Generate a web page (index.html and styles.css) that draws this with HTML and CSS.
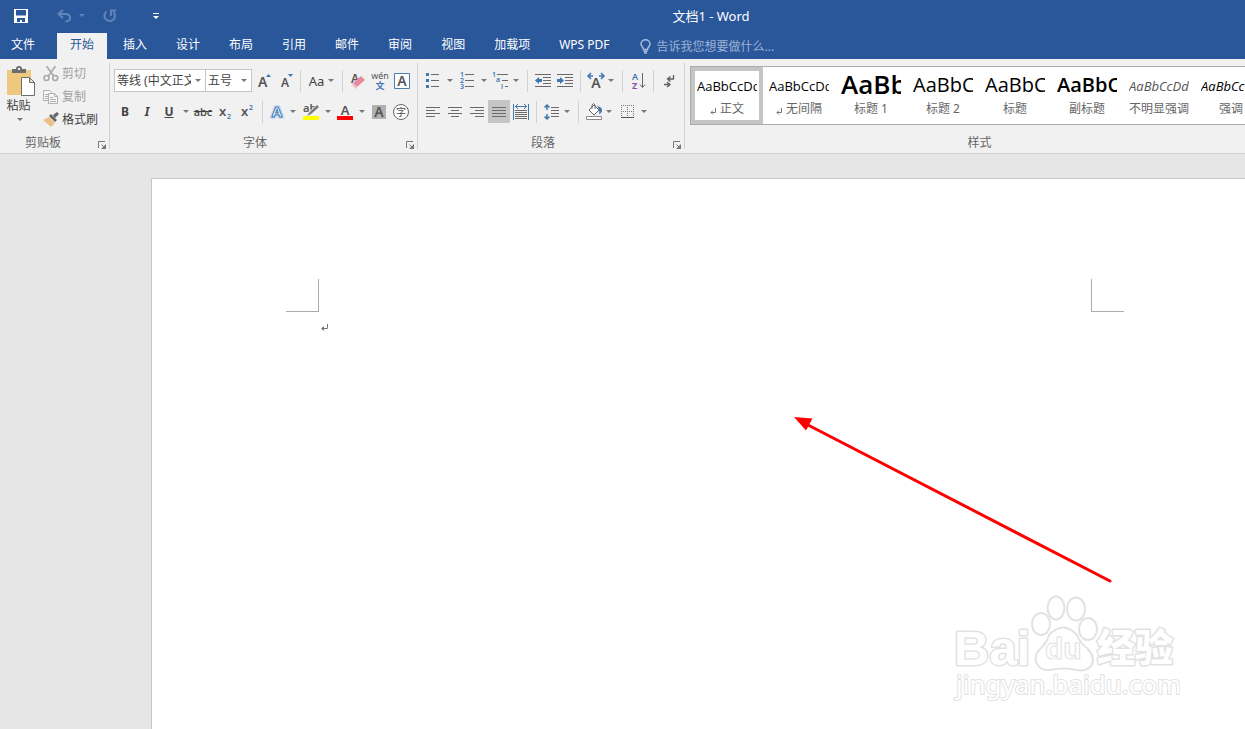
FILE: index.html
```html
<!DOCTYPE html>
<html lang="zh-CN">
<head>
<meta charset="utf-8">
<title>文档1 - Word</title>
<link rel="stylesheet" href="styles.css">
</head>
<body>
<header class="titlebar">
  <div class="quick">
    <button class="q save" aria-label="保存"><svg width="14" height="14" viewBox="0 0 14 14"><path fill="#fff" fill-rule="evenodd" d="M0 0h14v14H0zM2 1v5.500h10V1zM3 9v4h3v-2h2v2h3V9z"/></svg></button>
    <button class="q undo" aria-label="撤消"><svg width="15" height="14" viewBox="0 0 15 14" fill="none" stroke="#6384b8" stroke-width="2"><path d="M6 1L1.500 5L6 9M2 5h6.500c6 0 6.500 7.500 0 7.500"/></svg></button>
    <button class="q undo-more" aria-label="撤消选项"><i class="arrow dim"></i></button>
    <button class="q redo" aria-label="重复"><svg width="14" height="14" viewBox="0 0 14 14" fill="none" stroke="#6384b8" stroke-width="2"><path d="M3.500 2.500A5.300 5.300 0 1 0 10.500 3M8 7V1.500H13"/></svg></button>
    <button class="q custom" aria-label="自定义"><svg width="6" height="6" viewBox="0 0 6 6"><path fill="#fff" d="M0 0h6v1H0zM0 3h6L3 6z"/></svg></button>
  </div>
  <h1 class="title">文档1 - Word</h1>
</header>

<nav class="tabs">
  <button class="tab file">文件</button>
  <button class="tab active">开始</button>
  <button class="tab">插入</button>
  <button class="tab">设计</button>
  <button class="tab">布局</button>
  <button class="tab">引用</button>
  <button class="tab">邮件</button>
  <button class="tab">审阅</button>
  <button class="tab">视图</button>
  <button class="tab">加载项</button>
  <button class="tab">WPS PDF</button>
  <label class="tell"><svg width="11" height="15" viewBox="0 0 11 15" fill="none" stroke="#a9bcdc" stroke-width="1.500"><path d="M3.500 10.500C3.500 8 1 7.500 1 5a4.500 4.300 0 0 1 9 0c0 2.500-2.500 3-2.500 5.500zM3.500 12.200h4M4 14h3"/></svg><input class="tell-input" type="text" aria-label="告诉我" placeholder="告诉我您想要做什么..."></label>
</nav>

<main class="ribbon">
  <section class="group clipboard">
    <div class="clip-body">
      <button class="paste"><svg width="30" height="31" viewBox="0 0 30 31"><path fill="#edc87e" d="M1 4h24v25H1z"/><path fill="#6d6d6d" d="M6 3h4q0-3 3-3t3 3h4v4H6z"/><path fill="#f1f1f1" d="M12 2h2v2h-2z"/><path fill="#fff" stroke="#6d6d6d" d="M15.500 11.500h8l5 5v13h-13zM23.500 11.500v5h5"/></svg><span class="paste-text">粘贴</span><i class="arrow"></i></button>
      <div class="clip-list">
        <button class="clip off"><svg width="16" height="16" viewBox="0 0 16 16" fill="none" stroke="#a9a9a9" stroke-width="1.600"><path d="M3.500 0L11 10.500M12.500 0L5 10.500"/><circle cx="3.500" cy="12" r="2.500"/><circle cx="12.200" cy="12" r="2.500"/></svg>剪切</button>
        <button class="clip off"><svg width="16" height="16" viewBox="0 0 16 16" fill="#f6f6f6" stroke="#b0b0b0"><path d="M.5 1.500h6l2 2v8h-8zM2 5.500h4M2 7.500h4M2 9.500h4"/><path d="M5.500 4.500h6l3 3v7h-9zM11.500 4.500v3h3M7 8.500h3M7 10.500h6M7 12.500h6"/></svg>复制</button>
        <button class="clip"><svg width="16" height="16" viewBox="0 0 16 16"><path fill="#edc087" d="M0 8l6-3 6 6-4 4z"/><path fill="#666" d="M6 4l2-2 6 6-2 2zM10 3l4-3 2 2-4 4z"/></svg>格式刷</button>
      </div>
    </div>
    <footer class="caption">剪贴板<button class="launch" aria-label="剪贴板选项"><svg width="8" height="8" viewBox="0 0 8 8"><path fill="none" stroke="#777" d="M.5 7V.5H7M3.500 3.500L6 6"/><path fill="#777" d="M8 3v5H3z"/></svg></button></footer>
  </section>

  <section class="group font">
    <div class="row">
      <span class="combo family"><select aria-label="字体"><option>等线 (中文正文)</option></select><i class="arrow"></i></span>
      <span class="combo size"><select aria-label="字号"><option>五号</option></select><i class="arrow"></i></span>
      <button class="tool" aria-label="增大字号"><svg viewBox="0 0 22 22"><text class="glyph" x="6" y="17" font-size="14">A</text><path fill="#3f76b0" d="M14 7h5l-2.500-3z"/></svg></button>
      <button class="tool" aria-label="减小字号"><svg viewBox="0 0 22 22"><text class="glyph" x="7" y="17" font-size="12">A</text><path fill="#3f76b0" d="M14 4h5l-2.500 3z"/></svg></button>
      <i class="sep"></i>
      <button class="tool case">Aa<i class="arrow"></i></button>
      <i class="sep"></i>
      <button class="tool" aria-label="清除格式"><svg viewBox="0 0 22 22"><text class="glyph" x="4" y="13" font-size="12">A</text><path fill="#e88a9c" d="M6 13l8-7 4 4-8 7z"/><path fill="#f3b9c3" d="M6 13l4 4-1 2-4-4z"/></svg></button>
      <button class="tool" aria-label="拼音指南"><svg viewBox="0 0 22 22"><text class="glyph thin" x="11" y="9" font-size="9" text-anchor="middle">wén</text><text class="glyph blue" x="11" y="19" font-size="9" text-anchor="middle">文</text></svg></button>
      <button class="tool" aria-label="字符边框"><svg viewBox="0 0 22 22"><path fill="#fff" stroke="#4c7ead" d="M3.500 3.500h15v15h-15z"/><text class="glyph" x="11" y="16" font-size="14" text-anchor="middle">A</text></svg></button>
    </div>
    <div class="row">
      <button class="tool"><b>B</b></button>
      <button class="tool"><em>I</em></button>
      <button class="tool"><u>U</u></button>
      <button class="drop" aria-label="下划线选项"><i class="arrow"></i></button>
      <button class="tool"><s>abc</s></button>
      <button class="tool" aria-label="下标"><svg viewBox="0 0 22 22"><text class="glyph" x="5" y="15" font-size="13">x</text><text class="glyph blue" x="13" y="18" font-size="7">2</text></svg></button>
      <button class="tool" aria-label="上标"><svg viewBox="0 0 22 22"><text class="glyph" x="5" y="15" font-size="13">x</text><text class="glyph blue" x="13" y="9" font-size="7">2</text></svg></button>
      <i class="sep"></i>
      <button class="tool" aria-label="文本效果"><svg viewBox="0 0 22 22"><text x="10" y="16" font-size="15" font-weight="700" text-anchor="middle" fill="#fff" stroke="#cbdcee" stroke-width="4" stroke-linejoin="round">A</text><text x="10" y="16" font-size="15" font-weight="700" text-anchor="middle" fill="#fff" stroke="#4077b5">A</text></svg></button>
      <button class="drop narrow" aria-label="文本效果选项"><i class="arrow"></i></button>
      <button class="tool" aria-label="突出显示"><svg viewBox="0 0 22 22"><text class="glyph" x="3" y="11" font-size="11">ab</text><path fill="#f1f1f1" d="M8 12l8-8 4 2-8 9z"/><path fill="#777" d="M9 12l8-8 2 2-8 7-4 2z"/><path fill="#ff0" d="M3 15h16v4H3z"/></svg></button>
      <button class="drop" aria-label="突出显示颜色"><i class="arrow"></i></button>
      <button class="tool" aria-label="字体颜色"><svg viewBox="0 0 22 22"><text class="glyph" x="11" y="14" font-size="13" text-anchor="middle">A</text><path fill="#f00" d="M3 15h16v4H3z"/></svg></button>
      <button class="drop" aria-label="选择字体颜色"><i class="arrow"></i></button>
      <button class="tool" aria-label="字符底纹"><svg viewBox="0 0 22 22"><path fill="#b1b1b1" d="M4 4h14v14H4z"/><text class="glyph" x="11" y="16" font-size="14" text-anchor="middle">A</text></svg></button>
      <button class="tool" aria-label="带圈字符"><svg viewBox="0 0 22 22"><circle cx="11" cy="11" r="7.500" fill="#fff" stroke="#666"/><text x="11" y="15" font-size="10" text-anchor="middle" fill="#444">字</text></svg></button>
    </div>
    <footer class="caption">字体<button class="launch" aria-label="字体选项"><svg width="8" height="8" viewBox="0 0 8 8"><path fill="none" stroke="#777" d="M.5 7V.5H7M3.500 3.500L6 6"/><path fill="#777" d="M8 3v5H3z"/></svg></button></footer>
  </section>

  <section class="group para">
    <div class="row">
      <button class="tool" aria-label="项目符号"><svg viewBox="0 0 22 22"><path fill="#3f76b0" d="M4 3h3v3H4zM4 9h3v3H4zM4 15h3v3H4z"/><path stroke="#6a6a6a" d="M9 4.500h8M9 10.500h8M9 16.500h8"/></svg></button>
      <button class="drop" aria-label="项目符号选项"><i class="arrow"></i></button>
      <button class="tool" aria-label="编号"><svg viewBox="0 0 22 22"><g class="glyph blue" font-size="7"><text x="4" y="7">1</text><text x="4" y="13">2</text><text x="4" y="19">3</text></g><path stroke="#6a6a6a" d="M9 4.500h9M9 10.500h9M9 16.500h9"/></svg></button>
      <button class="drop" aria-label="编号选项"><i class="arrow"></i></button>
      <button class="tool" aria-label="多级列表"><svg viewBox="0 0 22 22"><g class="glyph blue" font-size="7"><text x="2" y="7">1</text><text x="6" y="12">a</text><text x="11" y="19">i</text></g><path stroke="#6a6a6a" d="M7 4.500h11M12 10.500h6M15 16.500h3"/></svg></button>
      <button class="drop slim" aria-label="多级列表选项"><i class="arrow"></i></button>
      <i class="sep"></i>
      <button class="tool" aria-label="减少缩进"><svg viewBox="0 0 22 22"><path stroke="#6a6a6a" d="M3 4.500h16M11 7.500h8M11 10.500h8M11 13.500h8M3 16.500h16"/><path fill="#3f76b0" d="M3 10.500L7 7v2h3v3H7v2z"/></svg></button>
      <button class="tool" aria-label="增加缩进"><svg viewBox="0 0 22 22"><path stroke="#6a6a6a" d="M3 4.500h16M11 7.500h8M11 10.500h8M11 13.500h8M3 16.500h16"/><path fill="#3f76b0" d="M10 10.500L6 7v2H3v3h3v2z"/></svg></button>
      <i class="sep"></i>
      <button class="tool" aria-label="中文版式"><svg viewBox="0 0 22 22"><text class="glyph" x="11" y="18" font-size="14" text-anchor="middle">A</text><path fill="none" stroke="#3f76b0" stroke-width="1.500" d="M6 3L3 6l3 3M3 6h5M16 3l3 3-3 3M19 6h-5"/></svg></button>
      <button class="drop slim" aria-label="中文版式选项"><i class="arrow"></i></button>
      <i class="sep"></i>
      <button class="tool" aria-label="排序"><svg viewBox="0 0 22 22"><text class="glyph blue" x="5" y="10" font-size="9">A</text><text x="5" y="19" font-size="9" font-weight="700" fill="#8c51a5">Z</text><path fill="none" stroke="#666" d="M15.500 3v14M13 14.500l2.500 3 2.500-3"/></svg></button>
      <i class="sep"></i>
      <button class="tool" aria-label="显示编辑标记"><svg viewBox="0 0 22 22" fill="none" stroke="#5d5d5d"><path d="M15.500 5v4H10M12.500 6.500l-3 2.500 3 2.500M6 14.500h6M9 12l3 2.500L9 17" stroke-width="1.300"/></svg></button>
    </div>
    <div class="row">
      <button class="tool" aria-label="左对齐"><svg viewBox="0 0 22 22"><path stroke="#6a6a6a" d="M4 6.500h14M4 9.500h9M4 12.500h14M4 15.500h9"/></svg></button>
      <button class="tool" aria-label="居中"><svg viewBox="0 0 22 22"><path stroke="#6a6a6a" d="M4 6.500h14M7 9.500h8M4 12.500h14M7 15.500h8"/></svg></button>
      <button class="tool" aria-label="右对齐"><svg viewBox="0 0 22 22"><path stroke="#6a6a6a" d="M4 6.500h14M9 9.500h9M4 12.500h14M9 15.500h9"/></svg></button>
      <button class="tool on" aria-label="两端对齐"><svg viewBox="0 0 22 22"><path stroke="#6a6a6a" d="M4 6.500h14M4 9.500h14M4 12.500h14M4 15.500h14"/></svg></button>
      <button class="tool" aria-label="分散对齐"><svg viewBox="0 0 22 22"><path stroke="#6a6a6a" d="M5 9.500h12M5 11.500h12M5 13.500h12M5 15.500h12M5 17.500h12"/><path fill="none" stroke="#3f76b0" d="M3.500 3v16M18.500 3v16M5 5.500h12M8 3L5.500 5.500 8 8M14 3l2.500 2.500L14 8"/></svg></button>
      <i class="sep"></i>
      <button class="tool" aria-label="行距"><svg viewBox="0 0 22 22"><path stroke="#6a6a6a" d="M10 6.500h8M10 9.500h8M10 12.500h8M10 15.500h8"/><path fill="none" stroke="#3f76b0" stroke-width="1.500" d="M6 4v5M3.500 6.500L6 4l2.500 2.500M6 18v-5M3.500 15.500L6 18l2.500-2.500"/></svg></button>
      <button class="drop slim" aria-label="行距选项"><i class="arrow"></i></button>
      <i class="sep"></i>
      <button class="tool" aria-label="底纹"><svg viewBox="0 0 22 22"><path fill="#fff" stroke="#666" d="M6 9l5-5 5 5-5 5zM9 8V4q1.500-3 3 0v4"/><path fill="#fff" stroke="#888" d="M3.500 15.500h15v3h-15z"/><path fill="#3f76b0" d="M14 5q5 1 5 4t-3 4q1-4-2-8z"/></svg></button>
      <button class="drop slim" aria-label="底纹颜色"><i class="arrow"></i></button>
      <button class="tool" aria-label="边框"><svg viewBox="0 0 22 22"><path fill="none" stroke="#777" stroke-dasharray="1 1" d="M5 4.500h13M5 10.500h13M5.500 4v12M11.500 4v12M17.500 4v12"/><path stroke="#555" d="M5 16.500h13"/></svg></button>
      <button class="drop" aria-label="边框选项"><i class="arrow"></i></button>
    </div>
    <footer class="caption">段落<button class="launch" aria-label="段落选项"><svg width="8" height="8" viewBox="0 0 8 8"><path fill="none" stroke="#777" d="M.5 7V.5H7M3.500 3.500L6 6"/><path fill="#777" d="M8 3v5H3z"/></svg></button></footer>
  </section>

  <section class="group styles">
    <div class="gallery">
      <button class="style chosen"><span class="sample">AaBbCcDd</span><span class="name"><svg class="ret" width="6" height="7" viewBox="0 0 6 7"><path fill="none" stroke="#777" d="M5.500 0v4.500H1M3 2.500l-2 2 2 2"/></svg>正文</span></button>
      <button class="style"><span class="sample">AaBbCcDd</span><span class="name"><svg class="ret" width="6" height="7" viewBox="0 0 6 7"><path fill="none" stroke="#777" d="M5.500 0v4.500H1M3 2.500l-2 2 2 2"/></svg>无间隔</span></button>
      <button class="style"><span class="sample huge">AaBb</span><span class="name">标题 1</span></button>
      <button class="style"><span class="sample big">AaBbC</span><span class="name">标题 2</span></button>
      <button class="style"><span class="sample big">AaBbC</span><span class="name">标题</span></button>
      <button class="style"><span class="sample big heavy">AaBbC</span><span class="name">副标题</span></button>
      <button class="style"><span class="sample slant soft">AaBbCcDd</span><span class="name">不明显强调</span></button>
      <button class="style"><span class="sample slant">AaBbCcDd</span><span class="name">强调</span></button>
    </div>
    <footer class="caption">样式</footer>
  </section>
</main>

<div class="workspace">
  <article class="page">
    <div class="margins"><i class="corner left"></i><i class="corner right"></i></div>
    <p class="text"><svg width="8" height="8" viewBox="0 0 8 8"><path fill="none" stroke="#777" d="M6.500 0v4.500H1"/><path fill="#777" d="M0 4.500L3 2v5z"/></svg></p>
    <svg class="pointer" width="320" height="170" viewBox="0 0 320 170"><path stroke="#f00" stroke-width="3" stroke-linecap="round" d="M14 10L316 166"/><path fill="#f00" d="M0 2l18.500 1.500-6.500 12z"/></svg>
    <svg class="watermark" width="230" height="112" viewBox="0 0 230 112" fill="#fff" stroke="#e2e2e2">
      <g stroke-width="3" paint-order="stroke" stroke-linejoin="round">
        <text x="4" y="73" font-size="49" font-weight="700" class="mark-latin">Bai</text>
        <text x="147" y="69" font-size="38" font-weight="900" class="mark-cjk">经验</text>
        <text x="6" y="102" font-size="26" class="mark-url" stroke-width="2">jingyan.baidu.com</text>
      </g>
      <g stroke-width="2"><ellipse cx="91" cy="32" rx="9" ry="11"/><ellipse cx="106" cy="16" rx="8.500" ry="11.500"/><ellipse cx="126" cy="17" rx="9" ry="11.500"/><ellipse cx="138" cy="37" rx="9" ry="11"/><path d="M99 43q14-15 28 0 3 8 10 13c13 14 2 25-10 22q-14-3-27 0c-14 1-19-13-9-22q6-6 8-13z"/></g>
      <text x="95" y="67" font-size="30" font-weight="700" stroke-width="1" class="mark-latin">du</text>
    </svg>
  </article>
</div>
</body>
</html>
```
FILE: styles.css
```css
* { box-sizing: border-box; }

body {
  margin: 0;
  min-height: 100vh;
  display: flex;
  flex-direction: column;
  overflow: hidden;
  background: #e6e6e6;
  color: #444;
  font: 12px/16px "Noto Sans", "Noto Sans CJK SC", sans-serif;
}

button, select, input {
  margin: 0;
  padding: 0;
  border: 0;
  background: none;
  color: inherit;
  font: inherit;
}

svg { display: block; flex: none; }

/* Title bar and quick access */
.titlebar {
  position: relative;
  display: flex;
  align-items: center;
  height: 33px;
  background: #2a579a;
  color: #fff;
}

.quick { display: flex; align-items: center; height: 32px; padding: 0 0 2px 14px; }
.q { display: flex; align-items: center; }
.undo { margin-left: 29px; }
.undo-more { margin-left: 7px; }
.redo { margin-left: 18px; }
.custom { margin-left: 36px; }

.title {
  position: absolute;
  inset: 8px 0 auto;
  margin: 0;
  padding-left: 177px;
  text-align: center;
  font-size: 13px;
  font-weight: 400;
}

/* Tabs */
.tabs { display: flex; gap: 3px; height: 26px; background: #2a579a; color: #fff; }
.tab { padding: 0 13px 2px; white-space: nowrap; }
.tab.file { padding: 0 19px 2px 11px; }
.tab.active { background: #f1f1f1; color: #2a579a; }
.tell { display: flex; align-items: center; gap: 6px; flex: 1; margin-left: 14px; }
.tell-input { flex: 1; min-width: 0; height: 24px; outline: 0; }
.tell-input::placeholder { color: #9db2d4; opacity: 1; }

/* Ribbon */
.ribbon {
  display: flex;
  background: #f1f1f1;
  border-bottom: 1px solid #d2d2d2;
}

.group {
  position: relative;
  display: flex;
  flex-direction: column;
  flex: none;
  padding: 6px 4px 2px;
}

.group:not(.styles)::after {
  content: "";
  position: absolute;
  inset: 4px 0 4px auto;
  width: 1px;
  background: #d2d2d2;
}

.clipboard { width: 110px; padding-left: 6px; }
.font { width: 308px; }
.para { width: 267px; }
.styles { flex: 1; min-width: 0; margin-right: -28px; padding: 7px 0 2px 5px; }

.row { display: flex; align-items: center; height: 31px; }
.caption { margin-top: auto; height: 20px; line-height: 24px; text-align: center; color: #666; }
.clipboard .caption { padding-right: 26px; }
.font .caption { padding-right: 18px; }
.para .caption { padding-right: 17px; }
.styles .caption { padding-right: 4px; }
.launch { position: absolute; right: 4px; bottom: 4px; }

.arrow {
  flex: none;
  width: 0;
  border: 3px solid transparent;
  border-top-color: #777;
  border-bottom: 0;
}
.arrow.dim { border-top-color: #6384b8; }

.sep { flex: none; width: 1px; height: 22px; margin: 0 4px; background: #d2d2d2; }

.clip-body { display: flex; gap: 7px; }
.paste { display: flex; flex-direction: column; align-items: center; width: 30px; padding-top: 1px; }
.paste-text { margin: 1px 5px 4px 0; white-space: nowrap; }
.paste .arrow { margin-right: 3px; }
.clip-list { display: flex; flex-direction: column; margin-top: -3px; }
.clip { display: flex; align-items: center; gap: 3px; height: 23px; white-space: nowrap; }
.off { color: #a0a0a0; }

.combo {
  position: relative;
  display: flex;
  align-items: center;
  flex: none;
  height: 23px;
  border: 1px solid #c6c6c6;
  background: #fff;
}
.combo select { width: 100%; height: 21px; padding: 0 14px 0 2px; appearance: none; outline: 0; overflow: hidden; }
.combo .arrow { position: absolute; right: 4px; }
.family { width: 92px; }
.size { width: 47px; margin-left: -1px; }

.tool { display: flex; flex: none; align-items: center; justify-content: center; width: 22px; height: 23px; }
.tool svg { width: 22px; height: 22px; }
.tool b, .tool em, .tool u { font-weight: 700; }
.tool s { font-size: 11px; font-weight: 500; }
.tool.case { gap: 4px; width: 33px; font-size: 13px; }
.tool.on { background: #c5c5c5; }
.glyph { fill: #555; font-weight: 600; }
.glyph.thin { font-weight: 400; }
.glyph.blue { fill: #3f76b0; }
.drop { display: flex; flex: none; align-items: center; justify-content: center; width: 12px; height: 22px; }
.drop.slim { width: 7px; margin-right: 4px; }
.drop.narrow { width: 11px; padding-right: 4px; }

/* Style gallery */
.gallery { display: flex; height: 59px; overflow: hidden; border: 1px solid #ababab; background: #fff; }
.style {
  display: flex;
  flex: none;
  flex-direction: column;
  align-items: center;
  justify-content: flex-start;
  width: 72px;
  padding: 4px 6px 0;
}
.style.chosen { padding: 0 2px; border: 4px solid #c5c5c5; }
.sample {
  width: 60px;
  height: 30px;
  overflow: hidden;
  color: #000;
  font: 13px/30px "Open Sans", sans-serif;
  text-align: left;
  white-space: nowrap;
}
.huge { font-size: 26px; line-height: 26px; font-weight: 600; }
.big { font-size: 20px; line-height: 28px; }
.heavy { font-weight: 600; }
.slant { font-style: italic; }
.soft { color: #555; }
.name { display: flex; justify-content: center; align-items: center; gap: 4px; color: #666; white-space: nowrap; }
.ret { margin-top: 5px; }

/* Document */
.workspace { display: flex; flex: 1; padding: 24px 0 0 151px; }
.page {
  position: relative;
  flex: 1;
  min-width: 0;
  border: 1px solid #c6c6c6;
  border-width: 1px 0 0 1px;
  background: #fff;
}
.margins { display: flex; justify-content: space-between; padding: 100px 121px 0 134px; }
.corner { width: 33px; height: 33px; border: 0 solid #ababab; }
.corner.left { border-width: 0 1px 1px 0; }
.corner.right { border-width: 0 0 1px 1px; }
.text { margin: 12px 0 0 169px; }
.pointer { position: absolute; left: 642px; top: 236px; }
.watermark { position: absolute; right: 65px; top: 413px; }
.mark-latin { font-family: "Liberation Sans", sans-serif; }
.mark-cjk { font-family: "Noto Sans CJK SC", sans-serif; }
.mark-url { font-family: "Noto Sans", sans-serif; }
```
